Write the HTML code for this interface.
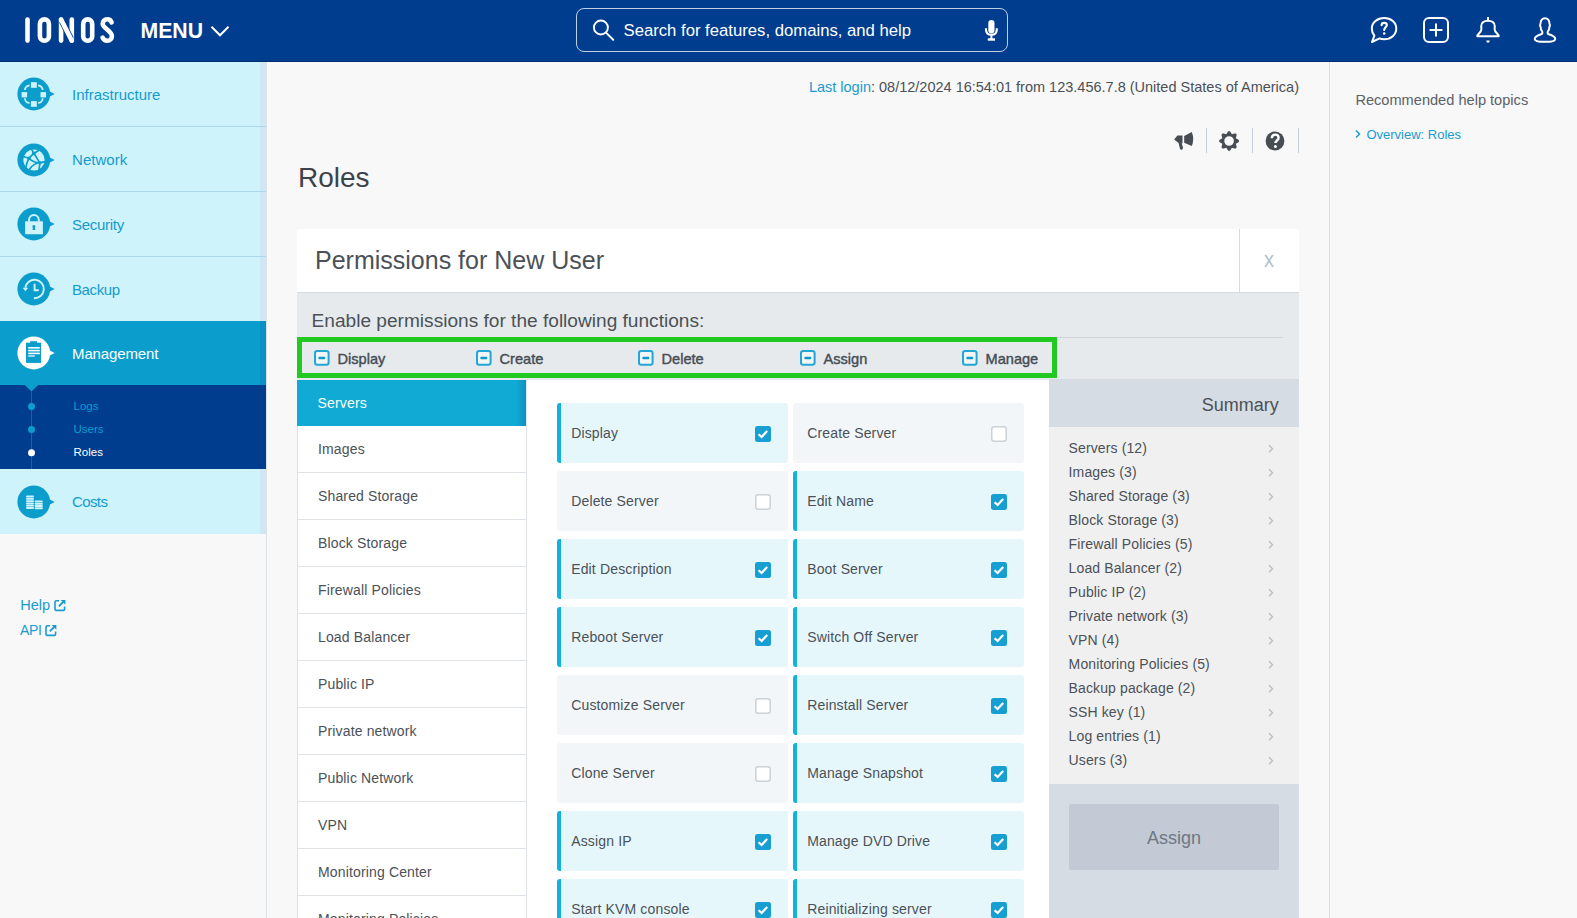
<!DOCTYPE html>
<html><head><meta charset="utf-8"><title>Roles</title>
<style>
*{box-sizing:border-box;margin:0;padding:0}
html,body{width:1577px;height:918px;overflow:hidden;background:#f8f8f8;font-family:"Liberation Sans",sans-serif}
.a{position:absolute}
.t{position:absolute;line-height:0;white-space:nowrap}
svg{position:absolute;overflow:visible}
</style></head><body>
<div class="a" style="left:0px;top:0px;width:1577px;height:62px;background:#003d8f;"></div>
<div class="a" style="left:0px;top:61px;width:1577px;height:1px;background:#002e6e;"></div>
<svg style="left:0;top:0" width="260" height="62" viewBox="0 0 260 62">
 <g fill="none" stroke="#fff" stroke-width="4.6" stroke-linecap="round" stroke-linejoin="round">
  <line x1="27.5" y1="19.6" x2="27.5" y2="40.6"/>
  <rect x="39.9" y="19.4" width="9" height="21.4" rx="4.5"/>
  <line x1="61.1" y1="19.6" x2="61.1" y2="40.6"/>
  <line x1="71.8" y1="19.6" x2="71.8" y2="40.6"/>
  <rect x="83.2" y="19.4" width="9" height="21.4" rx="4.5"/>
  <path d="M111.6 22.3 C110.6 19.8 108.9 19.3 107.3 19.3 C104.4 19.3 102.7 21.3 102.7 23.9 C102.7 27.6 111.9 31.2 111.9 35.9 C111.9 38.9 109.9 40.8 107.3 40.8 C105.3 40.8 103.4 39.9 102.6 37.6"/>
 </g>
 <path d="M61.9 21.2 L71 39" stroke="#003d8f" stroke-width="6.2"/>
 <path d="M61.1 19.6 L71.8 40.6" stroke="#fff" stroke-width="4.6" stroke-linecap="round"/>
 <text x="140.5" y="38.3" font-family="Liberation Sans" font-weight="bold" font-size="22" fill="#fff" textLength="62.5" lengthAdjust="spacingAndGlyphs">MENU</text>
 <polyline points="211.5,26.8 220,35.3 228.5,26.8" fill="none" stroke="#fff" stroke-width="2"/>
</svg>
<div class="a" style="left:576px;top:8px;width:432px;height:44px;border:1px solid rgba(255,255,255,.75);border-radius:8px"></div>
<svg style="left:0;top:0" width="1577" height="62" viewBox="0 0 1577 62">
 <circle cx="600.9" cy="27.5" r="7" fill="none" stroke="#fff" stroke-width="1.9"/>
 <line x1="606" y1="32.6" x2="613.2" y2="39.8" stroke="#fff" stroke-width="2" stroke-linecap="round"/>
 <rect x="988.3" y="20" width="6.2" height="13.4" rx="3.1" fill="#fff"/>
 <path d="M986 28.2 L986 29.5 C986 32.8 988.2 34.8 991.4 34.8 C994.6 34.8 996.8 32.8 996.8 29.5 L996.8 28.2" fill="none" stroke="#fff" stroke-width="2.1"/>
 <line x1="991.4" y1="34.8" x2="991.4" y2="39" stroke="#fff" stroke-width="2"/>
 <rect x="987.8" y="38.3" width="7.2" height="2.4" fill="#fff"/>
 <g fill="none" stroke="#fff" stroke-width="2" stroke-linejoin="round" stroke-linecap="round">
  <path d="M1374.4 35.6 C1372.7 33.6 1371.8 31.2 1371.8 28.6 C1371.8 22.5 1377.4 18 1384.2 18 C1391 18 1396.3 22.5 1396.3 28.6 C1396.3 34.7 1391 39.2 1384.2 39.2 C1382.5 39.2 1381 39 1379.6 38.4 L1372 42 Z"/>
  <path d="M1381.6 25.2 C1381.6 23.6 1382.7 22.9 1384.2 22.9 C1385.8 22.9 1386.8 23.8 1386.8 25.1 C1386.8 27.2 1384.2 27.3 1384.2 29.9" stroke-width="2.1"/>
  <rect x="1424" y="18" width="24" height="24" rx="5"/>
  <path d="M1477.3 36.3 L1498.7 36.3 C1498.7 33.9 1494.6 32.4 1494.6 29.2 L1494.8 26.2 C1494.8 22.6 1491.8 20.7 1488 20.7 C1484.2 20.7 1481.2 22.6 1481.2 26.2 L1481.4 29.2 C1481.4 32.4 1477.3 33.9 1477.3 36.3 Z"/>
  <path d="M1541.8 34.0 C1542.6 33.2 1542.5 32 1542.1 31.2 C1541 30.2 1540.6 28.4 1540.6 26.8 C1539.9 26.2 1539.9 24.6 1540.5 23.9 C1540.3 20.4 1542.2 18.3 1545 18.3 C1547.8 18.3 1549.7 20.4 1549.5 23.9 C1550.1 24.6 1550.1 26.2 1549.4 26.8 C1549.4 28.4 1549 30.2 1547.9 31.2 C1547.5 32 1547.4 33.2 1548.2 34.0 C1552.8 35.5 1555.3 37 1555.3 38.9 C1555.3 41 1551 41.8 1545 41.8 C1539 41.8 1534.7 41 1534.7 38.9 C1534.7 37 1537.2 35.5 1541.8 34.0 Z"/>
 </g>
 <circle cx="1384.2" cy="33.5" r="1.25" fill="#fff"/>
 <line x1="1429.5" y1="30" x2="1442.5" y2="30" stroke="#fff" stroke-width="2"/>
 <line x1="1436" y1="23.5" x2="1436" y2="36.5" stroke="#fff" stroke-width="2"/>
 <line x1="1488" y1="16.9" x2="1488" y2="20.5" stroke="#fff" stroke-width="2"/>
 <path d="M1486.2 40.4 L1489.8 40.4 Q1489.6 42.8 1488 42.8 Q1486.4 42.8 1486.2 40.4 Z" fill="#fff"/>
</svg>
<div class="t" style="top:30.51px;font-size:16.7px;color:#fff;left:623.5px;">Search for features, domains, and help</div>
<div class="a" style="left:266px;top:62px;width:1px;height:856px;background:#dde2e6;"></div>
<div class="a" style="left:0px;top:62px;width:266px;height:64px;background:#cff3fa;"></div>
<div class="a" style="left:260px;top:62px;width:6px;height:64px;background:#d0e6f2;"></div>
<div class="a" style="left:0px;top:126px;width:266px;height:1px;background:#a9d9ea;"></div>
<div class="a" style="left:0px;top:127px;width:266px;height:64px;background:#cff3fa;"></div>
<div class="a" style="left:260px;top:127px;width:6px;height:64px;background:#d0e6f2;"></div>
<div class="a" style="left:0px;top:191px;width:266px;height:1px;background:#a9d9ea;"></div>
<div class="a" style="left:0px;top:192px;width:266px;height:64px;background:#cff3fa;"></div>
<div class="a" style="left:260px;top:192px;width:6px;height:64px;background:#d0e6f2;"></div>
<div class="a" style="left:0px;top:256px;width:266px;height:1px;background:#a9d9ea;"></div>
<div class="a" style="left:0px;top:257px;width:266px;height:64px;background:#cff3fa;"></div>
<div class="a" style="left:260px;top:257px;width:6px;height:64px;background:#d0e6f2;"></div>
<div class="a" style="left:0px;top:321px;width:266px;height:1px;background:#a9d9ea;"></div>
<svg style="left:0;top:74px" width="60" height="40" viewBox="0 74 60 40">
 <circle cx="33.8" cy="94" r="16.4" fill="#0b9dcc"/>
 <path d="M47 90 L54.6 94 L47 98 Z" fill="#0b9dcc"/>
 <g fill="#cff3fa">
 <rect x="30.9" y="82.2" width="5.9" height="5.6"/>
 <rect x="30.9" y="101.1" width="5.9" height="5.7"/>
 <rect x="21.6" y="92.1" width="5.5" height="5.3"/>
 <rect x="40.5" y="92.1" width="5.5" height="5.3"/>
</g>
<g fill="none" stroke="#cff3fa" stroke-width="1.8">
 <path d="M29.5 85.5 A4.6 4.6 0 0 0 24.9 90.1"/>
 <path d="M38.1 85.5 A4.6 4.6 0 0 1 42.7 90.1"/>
 <path d="M42.7 98.3 A4.6 4.6 0 0 1 38.1 102.9"/>
 <path d="M29.5 102.9 A4.6 4.6 0 0 1 24.9 98.3"/>
</g>
</svg>
<svg style="left:0;top:139.5px" width="60" height="40" viewBox="0 139.5 60 40">
 <circle cx="33.8" cy="159.5" r="16.4" fill="#0b9dcc"/>
 <path d="M47 155.5 L54.6 159.5 L47 163.5 Z" fill="#0b9dcc"/>
 <circle cx="34" cy="159.5" r="10.6" fill="#cff3fa"/>
<g fill="none" stroke="#0b9dcc" stroke-width="1.7" stroke-linecap="round">
 <path d="M29 157.7 L33.8 152.9"/>
 <path d="M29 157.7 L23.2 156.0"/>
 <path d="M33.8 152.9 L31.5 148.7"/>
 <path d="M33.8 152.9 L38.2 150.3"/>
 <path d="M33.8 152.9 C36.5 156.0 37.5 159.5 39.9 162.3"/>
 <path d="M29 157.7 C31.5 160.5 35 162.0 39.9 162.3"/>
 <path d="M29 157.7 C27 161.5 26 165.0 25.8 167.5"/>
 <path d="M39.9 162.3 L44.2 161.3"/>
 <path d="M39.9 162.3 L38.9 170.0"/>
 <path d="M37.5 162.5 C33.5 164.0 30.5 166.5 29.2 169.8"/>
</g>
<g fill="#0b9dcc">
 <circle cx="29" cy="157.7" r="1.8"/>
 <circle cx="33.8" cy="152.9" r="1.8"/>
 <circle cx="39.9" cy="162.3" r="1.8"/>
</g>
</svg>
<svg style="left:0;top:203.9px" width="60" height="40" viewBox="0 203.9 60 40">
 <circle cx="33.8" cy="223.9" r="16.4" fill="#0b9dcc"/>
 <path d="M47 219.9 L54.6 223.9 L47 227.9 Z" fill="#0b9dcc"/>
 <path d="M29 221.5 L29 219.8 A4.9 4.9 0 0 1 38.8 219.8 L38.8 221.5" fill="none" stroke="#cff3fa" stroke-width="1.9"/>
<rect x="25.1" y="221.20000000000002" width="17.8" height="13" rx="0.6" fill="#cff3fa"/>
<circle cx="33.9" cy="226.5" r="1.5" fill="#0b9dcc"/>
<path d="M33.2 226.9 L32.4 229.8 L35.4 229.8 L34.6 226.9 Z" fill="#0b9dcc"/>
</svg>
<svg style="left:0;top:269px" width="60" height="40" viewBox="0 269 60 40">
 <circle cx="33.8" cy="289" r="16.4" fill="#0b9dcc"/>
 <path d="M47 285 L54.6 289 L47 293 Z" fill="#0b9dcc"/>
 <path d="M25.3 287.7 A9.3 9.3 0 1 1 33.9 298.3" fill="none" stroke="#cff3fa" stroke-width="1.9"/>
<path d="M22.6 287.7 L28.2 287.7 L25.4 291.3 Z" fill="#cff3fa"/>
<path d="M34.6 283.7 L34.6 290.3 L38.8 290.3" fill="none" stroke="#cff3fa" stroke-width="1.9"/>
</svg>
<div class="a" style="left:0px;top:321px;width:266px;height:64px;background:#0b9dcc;"></div>
<div class="a" style="left:260px;top:321px;width:6px;height:64px;background:#0a90c4;"></div>
<svg style="left:0;top:333px" width="60" height="40" viewBox="0 333 60 40">
 <circle cx="33.8" cy="353" r="16.4" fill="#fff"/>
 <path d="M47 349 L54.6 353 L47 357 Z" fill="#fff"/>
 <rect x="26" y="342.7" width="15" height="20.2" fill="#0b9dcc"/>
<rect x="30.2" y="341.2" width="6.8" height="2" fill="#0b9dcc"/>
<g fill="#fff">
 <rect x="28.2" y="347" width="11.6" height="1.6"/>
 <rect x="28.2" y="349.8" width="11.6" height="1.6"/>
 <rect x="28.2" y="352.6" width="11.6" height="1.6"/>
 <rect x="28.2" y="355.4" width="6.6" height="1.2"/>
</g>
</svg>
<div class="a" style="left:0px;top:385px;width:266px;height:84px;background:#003d8f;"></div>
<svg style="left:0;top:385px" width="60" height="84" viewBox="0 385 60 84">
 <path d="M24.8 385 L31.5 391.6 L38.2 385 Z" fill="#0b9dcc"/>
 <line x1="31.5" y1="391" x2="31.5" y2="469" stroke="#0a6aa6" stroke-width="1"/>
 <circle cx="31.5" cy="406.4" r="3.5" fill="#0b9dcc"/>
 <circle cx="31.5" cy="429.5" r="3.5" fill="#0b9dcc"/>
 <circle cx="31.5" cy="452.7" r="3.5" fill="#fff"/>
</svg>
<div class="t" style="top:405.72px;font-size:11.5px;color:#0b9dcc;left:73.5px;">Logs</div>
<div class="t" style="top:428.92px;font-size:11.5px;color:#0b9dcc;left:73.5px;">Users</div>
<div class="t" style="top:452.02px;font-size:11.5px;color:#ffffff;left:73.5px;">Roles</div>
<div class="a" style="left:0px;top:469px;width:266px;height:65px;background:#cff3fa;"></div>
<div class="a" style="left:260px;top:469px;width:6px;height:65px;background:#d0e6f2;"></div>
<svg style="left:0;top:481.6px" width="60" height="40" viewBox="0 481.6 60 40">
 <circle cx="33.8" cy="501.6" r="16.4" fill="#0b9dcc"/>
 <path d="M47 497.6 L54.6 501.6 L47 505.6 Z" fill="#0b9dcc"/>
 <g fill="#cff3fa">
 <rect x="26" y="495.0" width="8" height="2.2" rx="1.1"/>
 <rect x="26" y="497.6" width="8" height="1.8" rx="0.9"/>
 <rect x="26" y="499.8" width="8" height="1.8" rx="0.9"/>
 <rect x="26" y="502.0" width="8" height="1.8" rx="0.9"/>
 <rect x="26" y="504.20000000000005" width="8" height="1.8" rx="0.9"/>
 <rect x="26" y="506.40000000000003" width="8" height="2.2" rx="1.1"/>
 <rect x="34.6" y="500.0" width="8.3" height="2.2" rx="1.1"/>
 <rect x="34.6" y="502.5" width="8.3" height="1.8" rx="0.9"/>
 <rect x="34.6" y="504.70000000000005" width="8.3" height="1.8" rx="0.9"/>
 <rect x="34.6" y="506.90000000000003" width="8.3" height="2" rx="1"/>
</g>
</svg>
<div class="t" style="top:94.80px;font-size:15px;color:#149bcf;left:72.0px;">Infrastructure</div>
<div class="t" style="top:160.30px;font-size:15px;color:#149bcf;letter-spacing:0.05px;left:72.0px;">Network</div>
<div class="t" style="top:225.30px;font-size:15px;color:#149bcf;letter-spacing:-0.28px;left:72.0px;">Security</div>
<div class="t" style="top:289.80px;font-size:15px;color:#149bcf;letter-spacing:-0.4px;left:72.0px;">Backup</div>
<div class="t" style="top:502.40px;font-size:15px;color:#149bcf;letter-spacing:-0.6px;left:72.0px;">Costs</div>
<div class="t" style="top:353.80px;font-size:15px;color:#ffffff;letter-spacing:-0.12px;left:72.0px;">Management</div>
<div class="t" style="top:604.84px;font-size:14.6px;color:#1a9bd0;left:20.2px;">Help</div>
<div class="t" style="top:630.05px;font-size:14.0px;color:#1a9bd0;letter-spacing:-0.3px;left:20.0px;">API</div>
<svg style="left:54.3px;top:598.6px" width="14" height="14" viewBox="0 0 14 14">
 <path d="M5 1.8 L2.2 1.8 Q1 1.8 1 3 L1 10.2 Q1 11.4 2.2 11.4 L9.4 11.4 Q10.6 11.4 10.6 10.2 L10.6 7.4" fill="none" stroke="#1a9bd0" stroke-width="1.6"/>
 <path d="M6.6 1 L11.4 1 L11.4 5.8 Z" fill="#1a9bd0"/>
 <path d="M4.8 7.4 L10.2 2" stroke="#1a9bd0" stroke-width="1.8"/>
</svg>
<svg style="left:45.4px;top:623.6px" width="14" height="14" viewBox="0 0 14 14">
 <path d="M5 1.8 L2.2 1.8 Q1 1.8 1 3 L1 10.2 Q1 11.4 2.2 11.4 L9.4 11.4 Q10.6 11.4 10.6 10.2 L10.6 7.4" fill="none" stroke="#1a9bd0" stroke-width="1.6"/>
 <path d="M6.6 1 L11.4 1 L11.4 5.8 Z" fill="#1a9bd0"/>
 <path d="M4.8 7.4 L10.2 2" stroke="#1a9bd0" stroke-width="1.8"/>
</svg>
<div class="a" style="left:1329px;top:62px;width:1px;height:856px;background:#d7dde2;"></div>
<div class="t" style="top:100.24px;font-size:14.6px;color:#5b6167;left:1355.4px;">Recommended help topics</div>
<svg style="left:1354px;top:128px" width="10" height="14" viewBox="0 0 10 14">
 <polyline points="2,2.5 5.5,6 2,9.5" fill="none" stroke="#1a9bd0" stroke-width="1.5"/>
</svg>
<div class="t" style="top:135.10px;font-size:13px;color:#1a9bd0;left:1366.4px;">Overview: Roles</div>
<div class="t" style="top:87.08px;right:278px;font-size:14.5px;color:#4b5157"><span style="color:#1a9bd0">Last login</span>: 08/12/2024 16:54:01 from 123.456.7.8 (United States of America)</div>
<svg style="left:1160px;top:120px" width="150" height="40" viewBox="1160 120 150 40">
 <g fill="#474d53">
  <path d="M1177.4 135.4 L1182.5 135.4 L1182.5 143.2 L1181.7 143.5 L1183 147.6 Q1183.2 150 1181 149.8 Q1180.2 149.6 1179.9 148.6 L1178.6 143 L1174.1 139.5 Z"/>
  <path d="M1184.2 135.9 L1191.8 132.1 Q1194.6 139.1 1191.8 146.1 L1184.2 142.8 Z"/>
  <path fill-rule="evenodd" d="M1226.31 134.26 L1228.15 131.15 L1230.05 131.15 L1231.89 134.26 L1235.40 133.36 L1236.74 134.70 L1235.84 138.21 L1238.95 140.05 L1238.95 141.95 L1235.84 143.79 L1236.74 147.30 L1235.40 148.64 L1231.89 147.74 L1230.05 150.85 L1228.15 150.85 L1226.31 147.74 L1222.80 148.64 L1221.46 147.30 L1222.36 143.79 L1219.25 141.95 L1219.25 140.05 L1222.36 138.21 L1221.46 134.70 L1222.80 133.36 Z M1233.90 141 A4.8 4.8 0 1 0 1224.30 141 A4.8 4.8 0 1 0 1233.90 141 Z"/>
 </g>
 <rect x="1206" y="128" width="1" height="25" fill="#c5cdd8"/>
 <rect x="1252" y="128" width="1" height="25" fill="#c5cdd8"/>
 <rect x="1298" y="128" width="1" height="25" fill="#c5cdd8"/>
 <circle cx="1275" cy="141" r="9.4" fill="#474d53"/>
 <path d="M1271.8 138.3 C1271.8 135.8 1273.3 134.6 1275.2 134.6 C1277.2 134.6 1278.6 135.9 1278.6 137.7 C1278.6 140.4 1275.4 140.5 1275.4 143" fill="none" stroke="#fff" stroke-width="2.4"/>
 <circle cx="1275.4" cy="146.4" r="1.5" fill="#fff"/>
</svg>
<div class="t" style="top:178.30px;font-size:28px;color:#3d4349;left:298.0px;">Roles</div>
<div class="a" style="left:297px;top:229px;width:1002px;height:64px;background:#ffffff;border-radius:2px 2px 0 0"></div>
<div class="a" style="left:297px;top:292px;width:1002px;height:1px;background:#d5dbe1;"></div>
<div class="a" style="left:1239px;top:229px;width:1px;height:63px;background:#d5dbe1;"></div>
<div class="t" style="top:260.38px;font-size:22px;color:#b3bfcc;left:1263.6px;transform:scaleX(0.92);transform-origin:0 0">x</div>
<div class="t" style="top:259.74px;font-size:25px;color:#4b5157;left:315.0px;">Permissions for New User</div>
<div class="a" style="left:297px;top:293px;width:1002px;height:87px;background:#e6eaed;"></div>
<div class="a" style="left:312px;top:337px;width:971px;height:1px;background:#cfd5db;"></div>
<div class="t" style="top:320.58px;font-size:19.1px;color:#4b5157;left:311.6px;">Enable permissions for the following functions:</div>
<div class="a" style="left:297px;top:337px;width:760px;height:41px;border:5px solid #22c922"></div>
<svg style="left:314px;top:350px" width="16" height="16" viewBox="0 0 16 16">
 <rect x="1" y="1" width="13.6" height="13.8" rx="2.2" fill="#f3f5f7" stroke="#21a6d6" stroke-width="2"/>
 <rect x="4.3" y="6.8" width="7" height="2.4" rx="1" fill="#0b9dcc"/>
</svg>
<div class="t" style="top:358.94px;font-size:14.6px;color:#454c54;left:337.5px;-webkit-text-stroke:0.4px #454c54">Display</div>
<svg style="left:476px;top:350px" width="16" height="16" viewBox="0 0 16 16">
 <rect x="1" y="1" width="13.6" height="13.8" rx="2.2" fill="#f3f5f7" stroke="#21a6d6" stroke-width="2"/>
 <rect x="4.3" y="6.8" width="7" height="2.4" rx="1" fill="#0b9dcc"/>
</svg>
<div class="t" style="top:358.94px;font-size:14.6px;color:#454c54;left:499.5px;-webkit-text-stroke:0.4px #454c54">Create</div>
<svg style="left:638px;top:350px" width="16" height="16" viewBox="0 0 16 16">
 <rect x="1" y="1" width="13.6" height="13.8" rx="2.2" fill="#f3f5f7" stroke="#21a6d6" stroke-width="2"/>
 <rect x="4.3" y="6.8" width="7" height="2.4" rx="1" fill="#0b9dcc"/>
</svg>
<div class="t" style="top:358.94px;font-size:14.6px;color:#454c54;left:661.5px;-webkit-text-stroke:0.4px #454c54">Delete</div>
<svg style="left:800px;top:350px" width="16" height="16" viewBox="0 0 16 16">
 <rect x="1" y="1" width="13.6" height="13.8" rx="2.2" fill="#f3f5f7" stroke="#21a6d6" stroke-width="2"/>
 <rect x="4.3" y="6.8" width="7" height="2.4" rx="1" fill="#0b9dcc"/>
</svg>
<div class="t" style="top:358.94px;font-size:14.6px;color:#454c54;left:823.5px;-webkit-text-stroke:0.4px #454c54">Assign</div>
<svg style="left:962px;top:350px" width="16" height="16" viewBox="0 0 16 16">
 <rect x="1" y="1" width="13.6" height="13.8" rx="2.2" fill="#f3f5f7" stroke="#21a6d6" stroke-width="2"/>
 <rect x="4.3" y="6.8" width="7" height="2.4" rx="1" fill="#0b9dcc"/>
</svg>
<div class="t" style="top:358.94px;font-size:14.6px;color:#454c54;left:985.5px;-webkit-text-stroke:0.4px #454c54">Manage</div>
<div class="a" style="left:297px;top:380px;width:752px;height:538px;background:#ffffff;"></div>
<div class="a" style="left:297px;top:380px;width:1px;height:538px;background:#dfe3e7;"></div>
<div class="a" style="left:526px;top:380px;width:1px;height:538px;background:#dfe3e7;"></div>
<div class="a" style="left:297px;top:380px;width:229px;height:46px;background:#10aad4;"></div>
<div class="a" style="left:516px;top:380px;width:10px;height:46px;background:linear-gradient(90deg,rgba(0,0,0,0),rgba(0,40,70,.18))"></div>
<div class="t" style="top:403.15px;font-size:14px;color:#fff;letter-spacing:0.15px;left:317.6px;">Servers</div>
<div class="a" style="left:297px;top:472px;width:230px;height:1px;background:#dfe3e7;"></div>
<div class="t" style="top:449.15px;font-size:14px;color:#4b5157;letter-spacing:0.15px;left:318px;">Images</div>
<div class="a" style="left:297px;top:519px;width:230px;height:1px;background:#dfe3e7;"></div>
<div class="t" style="top:496.15px;font-size:14px;color:#4b5157;letter-spacing:0.15px;left:318px;">Shared Storage</div>
<div class="a" style="left:297px;top:566px;width:230px;height:1px;background:#dfe3e7;"></div>
<div class="t" style="top:543.15px;font-size:14px;color:#4b5157;letter-spacing:0.15px;left:318px;">Block Storage</div>
<div class="a" style="left:297px;top:613px;width:230px;height:1px;background:#dfe3e7;"></div>
<div class="t" style="top:590.15px;font-size:14px;color:#4b5157;letter-spacing:0.15px;left:318px;">Firewall Policies</div>
<div class="a" style="left:297px;top:660px;width:230px;height:1px;background:#dfe3e7;"></div>
<div class="t" style="top:637.15px;font-size:14px;color:#4b5157;letter-spacing:0.15px;left:318px;">Load Balancer</div>
<div class="a" style="left:297px;top:707px;width:230px;height:1px;background:#dfe3e7;"></div>
<div class="t" style="top:684.15px;font-size:14px;color:#4b5157;letter-spacing:0.15px;left:318px;">Public IP</div>
<div class="a" style="left:297px;top:754px;width:230px;height:1px;background:#dfe3e7;"></div>
<div class="t" style="top:731.15px;font-size:14px;color:#4b5157;letter-spacing:0.15px;left:318px;">Private network</div>
<div class="a" style="left:297px;top:801px;width:230px;height:1px;background:#dfe3e7;"></div>
<div class="t" style="top:778.15px;font-size:14px;color:#4b5157;letter-spacing:0.15px;left:318px;">Public Network</div>
<div class="a" style="left:297px;top:848px;width:230px;height:1px;background:#dfe3e7;"></div>
<div class="t" style="top:825.15px;font-size:14px;color:#4b5157;letter-spacing:0.15px;left:318px;">VPN</div>
<div class="a" style="left:297px;top:895px;width:230px;height:1px;background:#dfe3e7;"></div>
<div class="t" style="top:872.15px;font-size:14px;color:#4b5157;letter-spacing:0.15px;left:318px;">Monitoring Center</div>
<div class="a" style="left:297px;top:942px;width:230px;height:1px;background:#dfe3e7;"></div>
<div class="t" style="top:919.15px;font-size:14px;color:#4b5157;letter-spacing:0.15px;left:318px;">Monitoring Policies</div>
<div class="a" style="left:557px;top:403px;width:231px;height:60px;background:#e6f7fc;border-radius:3px"></div>
<div class="a" style="left:557px;top:403px;width:4px;height:60px;background:#11b3dc;border-radius:3px 0 0 3px"></div>
<svg style="left:755px;top:426px" width="16" height="16" viewBox="0 0 16 16">
 <rect x="0" y="0" width="16" height="16" rx="2.5" fill="#169fd0"/>
 <path d="M3.6 8.2 L6.6 11 L12.2 5" fill="none" stroke="#fff" stroke-width="2.2" stroke-linejoin="miter"/>
</svg>
<div class="t" style="top:433.15px;font-size:14px;color:#4b5157;letter-spacing:0.15px;left:571.2px;">Display</div>
<div class="a" style="left:793px;top:403px;width:231px;height:60px;background:#f2f6f9;border-radius:3px"></div>
<svg style="left:991px;top:426px" width="16" height="16" viewBox="0 0 16 16">
 <rect x="0.75" y="0.75" width="14.5" height="14.5" rx="2.5" fill="#fff" stroke="#cbd2d8" stroke-width="1.5"/>
</svg>
<div class="t" style="top:433.15px;font-size:14px;color:#4b5157;letter-spacing:0.15px;left:807.2px;">Create Server</div>
<div class="a" style="left:557px;top:471px;width:231px;height:60px;background:#f2f6f9;border-radius:3px"></div>
<svg style="left:755px;top:494px" width="16" height="16" viewBox="0 0 16 16">
 <rect x="0.75" y="0.75" width="14.5" height="14.5" rx="2.5" fill="#fff" stroke="#cbd2d8" stroke-width="1.5"/>
</svg>
<div class="t" style="top:501.15px;font-size:14px;color:#4b5157;letter-spacing:0.15px;left:571.2px;">Delete Server</div>
<div class="a" style="left:793px;top:471px;width:231px;height:60px;background:#e6f7fc;border-radius:3px"></div>
<div class="a" style="left:793px;top:471px;width:4px;height:60px;background:#11b3dc;border-radius:3px 0 0 3px"></div>
<svg style="left:991px;top:494px" width="16" height="16" viewBox="0 0 16 16">
 <rect x="0" y="0" width="16" height="16" rx="2.5" fill="#169fd0"/>
 <path d="M3.6 8.2 L6.6 11 L12.2 5" fill="none" stroke="#fff" stroke-width="2.2" stroke-linejoin="miter"/>
</svg>
<div class="t" style="top:501.15px;font-size:14px;color:#4b5157;letter-spacing:0.15px;left:807.2px;">Edit Name</div>
<div class="a" style="left:557px;top:539px;width:231px;height:60px;background:#e6f7fc;border-radius:3px"></div>
<div class="a" style="left:557px;top:539px;width:4px;height:60px;background:#11b3dc;border-radius:3px 0 0 3px"></div>
<svg style="left:755px;top:562px" width="16" height="16" viewBox="0 0 16 16">
 <rect x="0" y="0" width="16" height="16" rx="2.5" fill="#169fd0"/>
 <path d="M3.6 8.2 L6.6 11 L12.2 5" fill="none" stroke="#fff" stroke-width="2.2" stroke-linejoin="miter"/>
</svg>
<div class="t" style="top:569.15px;font-size:14px;color:#4b5157;letter-spacing:0.15px;left:571.2px;">Edit Description</div>
<div class="a" style="left:793px;top:539px;width:231px;height:60px;background:#e6f7fc;border-radius:3px"></div>
<div class="a" style="left:793px;top:539px;width:4px;height:60px;background:#11b3dc;border-radius:3px 0 0 3px"></div>
<svg style="left:991px;top:562px" width="16" height="16" viewBox="0 0 16 16">
 <rect x="0" y="0" width="16" height="16" rx="2.5" fill="#169fd0"/>
 <path d="M3.6 8.2 L6.6 11 L12.2 5" fill="none" stroke="#fff" stroke-width="2.2" stroke-linejoin="miter"/>
</svg>
<div class="t" style="top:569.15px;font-size:14px;color:#4b5157;letter-spacing:0.15px;left:807.2px;">Boot Server</div>
<div class="a" style="left:557px;top:607px;width:231px;height:60px;background:#e6f7fc;border-radius:3px"></div>
<div class="a" style="left:557px;top:607px;width:4px;height:60px;background:#11b3dc;border-radius:3px 0 0 3px"></div>
<svg style="left:755px;top:630px" width="16" height="16" viewBox="0 0 16 16">
 <rect x="0" y="0" width="16" height="16" rx="2.5" fill="#169fd0"/>
 <path d="M3.6 8.2 L6.6 11 L12.2 5" fill="none" stroke="#fff" stroke-width="2.2" stroke-linejoin="miter"/>
</svg>
<div class="t" style="top:637.15px;font-size:14px;color:#4b5157;letter-spacing:0.15px;left:571.2px;">Reboot Server</div>
<div class="a" style="left:793px;top:607px;width:231px;height:60px;background:#e6f7fc;border-radius:3px"></div>
<div class="a" style="left:793px;top:607px;width:4px;height:60px;background:#11b3dc;border-radius:3px 0 0 3px"></div>
<svg style="left:991px;top:630px" width="16" height="16" viewBox="0 0 16 16">
 <rect x="0" y="0" width="16" height="16" rx="2.5" fill="#169fd0"/>
 <path d="M3.6 8.2 L6.6 11 L12.2 5" fill="none" stroke="#fff" stroke-width="2.2" stroke-linejoin="miter"/>
</svg>
<div class="t" style="top:637.15px;font-size:14px;color:#4b5157;letter-spacing:0.15px;left:807.2px;">Switch Off Server</div>
<div class="a" style="left:557px;top:675px;width:231px;height:60px;background:#f2f6f9;border-radius:3px"></div>
<svg style="left:755px;top:698px" width="16" height="16" viewBox="0 0 16 16">
 <rect x="0.75" y="0.75" width="14.5" height="14.5" rx="2.5" fill="#fff" stroke="#cbd2d8" stroke-width="1.5"/>
</svg>
<div class="t" style="top:705.15px;font-size:14px;color:#4b5157;letter-spacing:0.15px;left:571.2px;">Customize Server</div>
<div class="a" style="left:793px;top:675px;width:231px;height:60px;background:#e6f7fc;border-radius:3px"></div>
<div class="a" style="left:793px;top:675px;width:4px;height:60px;background:#11b3dc;border-radius:3px 0 0 3px"></div>
<svg style="left:991px;top:698px" width="16" height="16" viewBox="0 0 16 16">
 <rect x="0" y="0" width="16" height="16" rx="2.5" fill="#169fd0"/>
 <path d="M3.6 8.2 L6.6 11 L12.2 5" fill="none" stroke="#fff" stroke-width="2.2" stroke-linejoin="miter"/>
</svg>
<div class="t" style="top:705.15px;font-size:14px;color:#4b5157;letter-spacing:0.15px;left:807.2px;">Reinstall Server</div>
<div class="a" style="left:557px;top:743px;width:231px;height:60px;background:#f2f6f9;border-radius:3px"></div>
<svg style="left:755px;top:766px" width="16" height="16" viewBox="0 0 16 16">
 <rect x="0.75" y="0.75" width="14.5" height="14.5" rx="2.5" fill="#fff" stroke="#cbd2d8" stroke-width="1.5"/>
</svg>
<div class="t" style="top:773.15px;font-size:14px;color:#4b5157;letter-spacing:0.15px;left:571.2px;">Clone Server</div>
<div class="a" style="left:793px;top:743px;width:231px;height:60px;background:#e6f7fc;border-radius:3px"></div>
<div class="a" style="left:793px;top:743px;width:4px;height:60px;background:#11b3dc;border-radius:3px 0 0 3px"></div>
<svg style="left:991px;top:766px" width="16" height="16" viewBox="0 0 16 16">
 <rect x="0" y="0" width="16" height="16" rx="2.5" fill="#169fd0"/>
 <path d="M3.6 8.2 L6.6 11 L12.2 5" fill="none" stroke="#fff" stroke-width="2.2" stroke-linejoin="miter"/>
</svg>
<div class="t" style="top:773.15px;font-size:14px;color:#4b5157;letter-spacing:0.15px;left:807.2px;">Manage Snapshot</div>
<div class="a" style="left:557px;top:811px;width:231px;height:60px;background:#e6f7fc;border-radius:3px"></div>
<div class="a" style="left:557px;top:811px;width:4px;height:60px;background:#11b3dc;border-radius:3px 0 0 3px"></div>
<svg style="left:755px;top:834px" width="16" height="16" viewBox="0 0 16 16">
 <rect x="0" y="0" width="16" height="16" rx="2.5" fill="#169fd0"/>
 <path d="M3.6 8.2 L6.6 11 L12.2 5" fill="none" stroke="#fff" stroke-width="2.2" stroke-linejoin="miter"/>
</svg>
<div class="t" style="top:841.15px;font-size:14px;color:#4b5157;letter-spacing:0.15px;left:571.2px;">Assign IP</div>
<div class="a" style="left:793px;top:811px;width:231px;height:60px;background:#e6f7fc;border-radius:3px"></div>
<div class="a" style="left:793px;top:811px;width:4px;height:60px;background:#11b3dc;border-radius:3px 0 0 3px"></div>
<svg style="left:991px;top:834px" width="16" height="16" viewBox="0 0 16 16">
 <rect x="0" y="0" width="16" height="16" rx="2.5" fill="#169fd0"/>
 <path d="M3.6 8.2 L6.6 11 L12.2 5" fill="none" stroke="#fff" stroke-width="2.2" stroke-linejoin="miter"/>
</svg>
<div class="t" style="top:841.15px;font-size:14px;color:#4b5157;letter-spacing:0.15px;left:807.2px;">Manage DVD Drive</div>
<div class="a" style="left:557px;top:879px;width:231px;height:60px;background:#e6f7fc;border-radius:3px"></div>
<div class="a" style="left:557px;top:879px;width:4px;height:60px;background:#11b3dc;border-radius:3px 0 0 3px"></div>
<svg style="left:755px;top:902px" width="16" height="16" viewBox="0 0 16 16">
 <rect x="0" y="0" width="16" height="16" rx="2.5" fill="#169fd0"/>
 <path d="M3.6 8.2 L6.6 11 L12.2 5" fill="none" stroke="#fff" stroke-width="2.2" stroke-linejoin="miter"/>
</svg>
<div class="t" style="top:909.15px;font-size:14px;color:#4b5157;letter-spacing:0.15px;left:571.2px;">Start KVM console</div>
<div class="a" style="left:793px;top:879px;width:231px;height:60px;background:#e6f7fc;border-radius:3px"></div>
<div class="a" style="left:793px;top:879px;width:4px;height:60px;background:#11b3dc;border-radius:3px 0 0 3px"></div>
<svg style="left:991px;top:902px" width="16" height="16" viewBox="0 0 16 16">
 <rect x="0" y="0" width="16" height="16" rx="2.5" fill="#169fd0"/>
 <path d="M3.6 8.2 L6.6 11 L12.2 5" fill="none" stroke="#fff" stroke-width="2.2" stroke-linejoin="miter"/>
</svg>
<div class="t" style="top:909.15px;font-size:14px;color:#4b5157;letter-spacing:0.15px;left:807.2px;">Reinitializing server</div>
<div class="a" style="left:1049px;top:379px;width:250px;height:48px;background:#d5dce3;"></div>
<div class="t" style="top:404.76px;font-size:18px;color:#4b5157;right:298.29999999999995px;">Summary</div>
<div class="a" style="left:1049px;top:427px;width:250px;height:357px;background:#f0f0f0;"></div>
<div class="t" style="top:448.35px;font-size:14px;color:#4b5157;letter-spacing:0.12px;left:1068.6px;">Servers (12)</div>
<svg style="left:1266px;top:443.2px" width="10" height="12" viewBox="0 0 10 12">
 <polyline points="3,2.2 6.5,5.7 3,9.2" fill="none" stroke="#b8bfc6" stroke-width="1.4"/>
</svg>
<div class="t" style="top:472.30px;font-size:14px;color:#4b5157;letter-spacing:0.12px;left:1068.6px;">Images (3)</div>
<svg style="left:1266px;top:467.15px" width="10" height="12" viewBox="0 0 10 12">
 <polyline points="3,2.2 6.5,5.7 3,9.2" fill="none" stroke="#b8bfc6" stroke-width="1.4"/>
</svg>
<div class="t" style="top:496.25px;font-size:14px;color:#4b5157;letter-spacing:0.12px;left:1068.6px;">Shared Storage (3)</div>
<svg style="left:1266px;top:491.09999999999997px" width="10" height="12" viewBox="0 0 10 12">
 <polyline points="3,2.2 6.5,5.7 3,9.2" fill="none" stroke="#b8bfc6" stroke-width="1.4"/>
</svg>
<div class="t" style="top:520.20px;font-size:14px;color:#4b5157;letter-spacing:0.12px;left:1068.6px;">Block Storage (3)</div>
<svg style="left:1266px;top:515.05px" width="10" height="12" viewBox="0 0 10 12">
 <polyline points="3,2.2 6.5,5.7 3,9.2" fill="none" stroke="#b8bfc6" stroke-width="1.4"/>
</svg>
<div class="t" style="top:544.15px;font-size:14px;color:#4b5157;letter-spacing:0.12px;left:1068.6px;">Firewall Policies (5)</div>
<svg style="left:1266px;top:539.0px" width="10" height="12" viewBox="0 0 10 12">
 <polyline points="3,2.2 6.5,5.7 3,9.2" fill="none" stroke="#b8bfc6" stroke-width="1.4"/>
</svg>
<div class="t" style="top:568.10px;font-size:14px;color:#4b5157;letter-spacing:0.12px;left:1068.6px;">Load Balancer (2)</div>
<svg style="left:1266px;top:562.95px" width="10" height="12" viewBox="0 0 10 12">
 <polyline points="3,2.2 6.5,5.7 3,9.2" fill="none" stroke="#b8bfc6" stroke-width="1.4"/>
</svg>
<div class="t" style="top:592.05px;font-size:14px;color:#4b5157;letter-spacing:0.12px;left:1068.6px;">Public IP (2)</div>
<svg style="left:1266px;top:586.9px" width="10" height="12" viewBox="0 0 10 12">
 <polyline points="3,2.2 6.5,5.7 3,9.2" fill="none" stroke="#b8bfc6" stroke-width="1.4"/>
</svg>
<div class="t" style="top:616.00px;font-size:14px;color:#4b5157;letter-spacing:0.12px;left:1068.6px;">Private network (3)</div>
<svg style="left:1266px;top:610.85px" width="10" height="12" viewBox="0 0 10 12">
 <polyline points="3,2.2 6.5,5.7 3,9.2" fill="none" stroke="#b8bfc6" stroke-width="1.4"/>
</svg>
<div class="t" style="top:639.95px;font-size:14px;color:#4b5157;letter-spacing:0.12px;left:1068.6px;">VPN (4)</div>
<svg style="left:1266px;top:634.8px" width="10" height="12" viewBox="0 0 10 12">
 <polyline points="3,2.2 6.5,5.7 3,9.2" fill="none" stroke="#b8bfc6" stroke-width="1.4"/>
</svg>
<div class="t" style="top:663.90px;font-size:14px;color:#4b5157;letter-spacing:0.12px;left:1068.6px;">Monitoring Policies (5)</div>
<svg style="left:1266px;top:658.75px" width="10" height="12" viewBox="0 0 10 12">
 <polyline points="3,2.2 6.5,5.7 3,9.2" fill="none" stroke="#b8bfc6" stroke-width="1.4"/>
</svg>
<div class="t" style="top:687.85px;font-size:14px;color:#4b5157;letter-spacing:0.12px;left:1068.6px;">Backup package (2)</div>
<svg style="left:1266px;top:682.7px" width="10" height="12" viewBox="0 0 10 12">
 <polyline points="3,2.2 6.5,5.7 3,9.2" fill="none" stroke="#b8bfc6" stroke-width="1.4"/>
</svg>
<div class="t" style="top:711.80px;font-size:14px;color:#4b5157;letter-spacing:0.12px;left:1068.6px;">SSH key (1)</div>
<svg style="left:1266px;top:706.65px" width="10" height="12" viewBox="0 0 10 12">
 <polyline points="3,2.2 6.5,5.7 3,9.2" fill="none" stroke="#b8bfc6" stroke-width="1.4"/>
</svg>
<div class="t" style="top:735.75px;font-size:14px;color:#4b5157;letter-spacing:0.12px;left:1068.6px;">Log entries (1)</div>
<svg style="left:1266px;top:730.5999999999999px" width="10" height="12" viewBox="0 0 10 12">
 <polyline points="3,2.2 6.5,5.7 3,9.2" fill="none" stroke="#b8bfc6" stroke-width="1.4"/>
</svg>
<div class="t" style="top:759.70px;font-size:14px;color:#4b5157;letter-spacing:0.12px;left:1068.6px;">Users (3)</div>
<svg style="left:1266px;top:754.55px" width="10" height="12" viewBox="0 0 10 12">
 <polyline points="3,2.2 6.5,5.7 3,9.2" fill="none" stroke="#b8bfc6" stroke-width="1.4"/>
</svg>
<div class="a" style="left:1049px;top:784px;width:250px;height:134px;background:#d5dce3;"></div>
<div class="a" style="left:1069px;top:804px;width:210px;height:66px;background:#c3cad6;border-radius:2px"></div>
<div class="t" style="top:837.76px;font-size:18px;color:#6d7884;left:1174px;width:0;display:flex;justify-content:center;">Assign</div>
</body></html>
